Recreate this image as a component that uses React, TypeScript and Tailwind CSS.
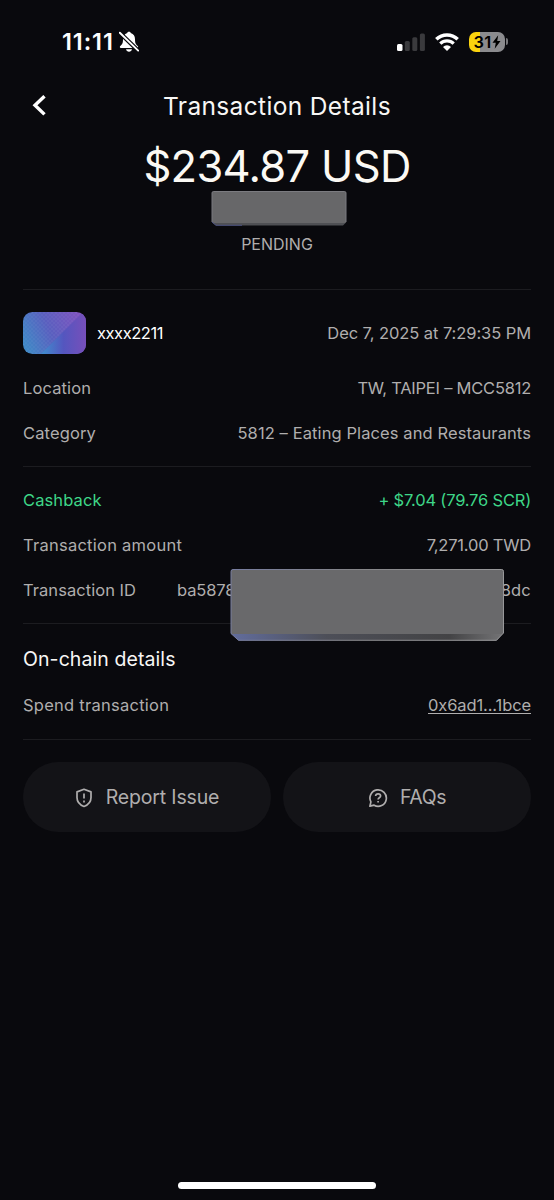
import type { ReactNode } from 'react'
import clsx from 'clsx'

type RowProps = {
  label: string
  labelClass?: string
  children: ReactNode
  valueClass?: string
}

function StatusBar() {
  return (
    <div className="flex h-[83px] shrink-0 items-center pr-[46px] pl-[62px] text-white">
      <span className="w-[52px] text-[23.5px] font-semibold tracking-[0.9px]">11:11</span>
      <svg className="ml-[5px]" width="20" height="22" viewBox="0 0 20 22" fill="none">
        <path
          d="M10 .8c-.9 0-1.6.5-1.8 1.3C5.400 3 4 5.300 4 8.200c0 3.900-.8 5.200-2.800 6.800-.7.8-.4 1.900.7 1.900h16.200c1.100 0 1.400-1.100.7-1.900C16.800 13.400 16 12.100 16 8.200c0-2.900-1.400-5.200-4.200-6.100C11.600 1.300 10.900.8 10 .8Z"
          fill="#fff"
        />
        <path d="M7 18.300h6c-.3 1.500-1.500 2.500-3 2.500s-2.700-1-3-2.500Z" fill="#fff" />
        <path d="M.5 1.500 19.500 20" stroke="#09090d" strokeWidth="4.200" />
        <path d="M.8 1.700 19.200 19.600" stroke="#fff" strokeWidth="1.900" strokeLinecap="round" />
      </svg>

      <svg className="ml-auto" width="29" height="18" viewBox="0 0 29 18">
        <rect x="0" y="11" width="5.500" height="7" rx="1.500" fill="#fff" />
        <rect x="7.800" y="8" width="5" height="10" rx="1.500" fill="#3a3a3d" />
        <rect x="15.300" y="4.300" width="5" height="13.700" rx="1.500" fill="#3a3a3d" />
        <rect x="22.900" y="0.500" width="5" height="17.500" rx="1.500" fill="#3a3a3d" />
      </svg>
      <svg className="ml-[9px]" width="24" height="18" viewBox="0 0 24 18" fill="none" stroke="#fff">
        <path d="M1.300 6.300a15.400 15.400 0 0 1 21.400 0" strokeWidth="3.500" />
        <path d="M5.300 10.700a9.500 9.500 0 0 1 13.400 0" strokeWidth="3.200" />
        <path d="M12 17.900 8 13.900a5.600 5.600 0 0 1 8 0Z" fill="#fff" stroke="none" />
      </svg>
      <div className="ml-[10px] flex items-center">
        <div className="flex h-[20px] w-[36px] items-center justify-center rounded-[7px] bg-[linear-gradient(90deg,#fbd30e_11px,#8b8b8e_11px)] text-black">
          <span className="text-[16.500px] leading-[20px] font-semibold tracking-[0.300px]">31</span>
          <svg width="9" height="14" viewBox="0 0 9 14">
            <path d="M6.200.3.500 7.800h3.300L2.700 13.700 8.500 6H5.200L6.200.3Z" fill="#000" />
          </svg>
        </div>
        <div className="ml-px h-[7px] w-[2px] rounded-r-full bg-[#77777a]" />
      </div>
    </div>
  )
}

function Row({ label, labelClass, children, valueClass }: RowProps) {
  return (
    <div className="flex h-[44.670px] items-center justify-between whitespace-nowrap">
      <span className={labelClass}>{label}</span>
      <span className={valueClass}>{children}</span>
    </div>
  )
}

// Frosted block that hides sensitive values
function Redaction({ large }: { large?: boolean }) {
  return large ? (
    <svg className="absolute top-px left-[207px]" width="275" height="74" viewBox="0 0 275 74">
      <defs>
        <linearGradient id="bevel" x1="0" x2="1" y1="0" y2="0">
          <stop offset="0" stopColor="#626d9d" />
          <stop offset=".35" stopColor="#4d4f58" />
          <stop offset=".8" stopColor="#434345" />
          <stop offset="1" stopColor="#747476" />
        </linearGradient>
        <linearGradient id="edge" x1="0" x2="1" y1="0" y2="0">
          <stop offset="0" stopColor="#777d9f" />
          <stop offset=".45" stopColor="#858588" />
          <stop offset="1" stopColor="#98989a" />
        </linearGradient>
      </defs>
      <path d="M3 .5h268.500a2 2 0 0 1 2 2V64l-7 7.500H8.500l-7.500-7V2.500a2 2 0 0 1 2-2Z" fill="url(#bevel)" />
      <path d="M3 .5h268.500a2 2 0 0 1 2 2V63.500L272 65H2l-1-1V2.500a2 2 0 0 1 2-2Z" fill="#69696b" />
      <path d="M1 64.500V2.500a2 2 0 0 1 2-2h268.500a2 2 0 0 1 2 2V64l-7 7.300H8.500Z" fill="none" stroke="url(#edge)" />
    </svg>
  ) : (
    <svg className="ml-[211px] shrink-0" width="136" height="35" viewBox="0 0 136 35">
      <path d="M2.500.5h131a1.500 1.500 0 0 1 1.500 1.500v29.500l-3 3H5l-4-3V2A1.500 1.500 0 0 1 2.500.5Z" fill="#4f5054" />
      <path d="M2.500.5h131a1.500 1.500 0 0 1 1.500 1.500v29l-1 1H2l-1-1V2A1.500 1.500 0 0 1 2.500.5Z" fill="#676769" />
      <path d="M1 31V2A1.500 1.500 0 0 1 2.500.5h131A1.500 1.500 0 0 1 135 2v29" fill="none" stroke="#7b7b80" />
      <path d="m1 31 4 3.300h26" fill="none" stroke="#4b527f" />
    </svg>
  )
}

function CardArt() {
  return (
    <svg width="63" height="42" viewBox="0 0 63 42">
      <defs>
        <linearGradient id="card" x1="0" y1=".65" x2="1" y2=".35">
          <stop offset="0" stopColor="#4088c6" />
          <stop offset=".45" stopColor="#5a5fbf" />
          <stop offset="1" stopColor="#8153c0" />
        </linearGradient>
        <linearGradient id="fold" x1="0" y1="0" x2="1" y2="0">
          <stop offset="0" stopColor="#3f8fce" />
          <stop offset=".5" stopColor="#5456bf" />
          <stop offset="1" stopColor="#774fba" />
        </linearGradient>
        <pattern id="dots" width="4" height="4" patternUnits="userSpaceOnUse">
          <circle cx="1" cy="1" r=".7" fill="#9fb0e0" fillOpacity=".18" />
          <circle cx="3" cy="3" r=".7" fill="#9fb0e0" fillOpacity=".18" />
        </pattern>
        <clipPath id="cardShape">
          <rect width="63" height="42" rx="9.500" />
        </clipPath>
      </defs>
      <g clipPath="url(#cardShape)">
        <rect width="63" height="42" fill="url(#card)" />
        <path d="M0 0h60L18 42H0Z" fill="url(#dots)" />
        <path d="M60 0 18 42h45V0Z" fill="url(#fold)" />
      </g>
    </svg>
  )
}

function ActionButton({ icon, label, className }: { icon: ReactNode; label: string; className?: string }) {
  return (
    <button className="flex h-[70px] flex-1 items-center justify-center rounded-full bg-[#131317] pt-[2px] text-[#b0aeae]">
      {icon}
      <span className={clsx('text-[19.500px]', className)}>{label}</span>
    </button>
  )
}

export default function App() {
  return (
    <div className="flex h-[1200px] w-[554px] flex-col overflow-hidden bg-[#09090d] font-['Inter','Liberation_Sans',sans-serif] text-[16.500px] text-[#b0aeae]">
      <StatusBar />

      <header className="grid h-[46px] shrink-0 grid-cols-[60px_1fr_60px] items-center">
        <svg className="ml-[32px]" width="15" height="22" viewBox="0 0 15 22" fill="none">
          <path d="M12.500 1.200 3 10.200l9.500 9.200" stroke="#fff" strokeWidth="3.400" />
        </svg>
        <h1 className="pt-px text-center text-[24.500px] tracking-[0.350px] whitespace-nowrap text-[#f8f7f5]">Transaction Details</h1>
      </header>

      <div className="mt-3 h-[50px] shrink-0 text-center text-[43.500px] leading-[51px] tracking-[-0.700px] text-[#fbf9f4]">
        $234.87 USD
      </div>
      <Redaction />
      <div className="h-[37px] text-center text-[16px] leading-[37px]">PENDING</div>

      <main className="mx-[23px] mt-[26px] flex flex-col divide-y divide-[#1c1c20] border-t border-[#1c1c20]">
        <section className="pt-[22px] pb-[11px]">
          <div className="mb-3 flex h-[42px] items-center whitespace-nowrap">
            <CardArt />
            <span className="ml-[11px] tracking-[-0.450px] text-white">xxxx2211</span>
            <span className="ml-auto tracking-[-0.080px]">Dec 7, 2025 at 7:29:35 PM</span>
          </div>
          <Row label="Location" labelClass="tracking-[0.110px]" valueClass="tracking-[-0.230px]">
            TW, TAIPEI – MCC5812
          </Row>
          <Row label="Category" labelClass="tracking-[0.130px]" valueClass="tracking-[0.100px]">
            5812 – Eating Places and Restaurants
          </Row>
        </section>

        <section className="py-[11px]">
          <div className="text-[#3ed688]">
            <Row label="Cashback" labelClass="tracking-[0.100px]" valueClass="tracking-[-0.190px]">
              + $7.04 (79.76 SCR)
            </Row>
          </div>
          <Row label="Transaction amount" labelClass="tracking-[0.250px]" valueClass="tracking-[-0.210px]">
            7,271.00 TWD
          </Row>
          <div className="relative">
            <Row label="Transaction ID" labelClass="tracking-[0.050px]" valueClass="flex w-[354px] justify-between">
              <span className="tracking-[-0.100px]">ba5878</span>
              <span className="tracking-[0.200px]">8dc</span>
            </Row>
            <Redaction large />
          </div>
        </section>

        <section className="pt-[11px] pb-[11px]">
          <h2 className="h-[48px] text-[19.500px] leading-[48px] tracking-[0.080px] text-[#f8f7f5]">On-chain details</h2>
          <Row
            label="Spend transaction"
            labelClass="tracking-[0.260px]"
            valueClass="tracking-[-0.110px] underline decoration-1 underline-offset-[2px]"
          >
            0x6ad1...1bce
          </Row>
        </section>

        <section className="flex gap-3 pt-[22px]">
          <ActionButton
            label="Report Issue"
            className="ml-[13px] tracking-[-0.150px]"
            icon={
              <svg width="18" height="20" viewBox="0 0 18 20" fill="none" stroke="currentColor" strokeWidth="1.700">
                <path d="M9 1.300 16 3.900v5.700c0 4.300-2.800 7.400-7 8.900-4.200-1.500-7-4.600-7-8.900V3.900L9 1.300Z" strokeLinejoin="round" />
                <path d="M9 5.500v5M9 12.500v1.900" />
              </svg>
            }
          />
          <ActionButton
            label="FAQs"
            className="ml-[12px] tracking-[-0.400px]"
            icon={
              <svg width="20" height="20" viewBox="0 0 20 20" fill="none" stroke="currentColor" strokeWidth="1.700">
                <path
                  d="M1.900 18.200 2.900 13.900A8.200 8.200 0 1 1 6.100 17.200L1.900 18.200Z"
                  strokeLinejoin="round"
                />
                <path d="M7.600 8c.1-1.400 1.100-2.200 2.500-2.200s2.500.9 2.500 2.200c0 1.900-2.500 1.700-2.500 3.500M10.100 12.900v1.700" />
              </svg>
            }
          />
        </section>
      </main>

      <div className="mx-auto mt-auto mb-[11px] h-[7px] w-[198px] shrink-0 rounded-full bg-white" />
    </div>
  )
}
